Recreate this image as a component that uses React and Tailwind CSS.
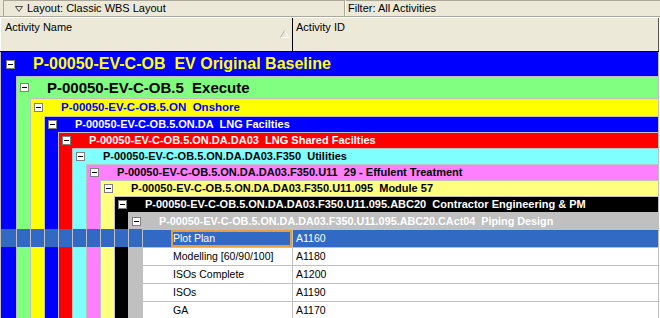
import React from "react";

// WBS levels, outermost first
const wbs = [
  { bg: "bg-[#0000ff]", fg: "text-[#ffff00]", size: "text-[16px]", h: "h-[24px]", code: "P-00050-EV-C-OB", name: "EV Original Baseline" },
  { bg: "bg-[#80ff80]", fg: "text-black", size: "text-[15px]", h: "h-[22px]", code: "P-00050-EV-C-OB.5", name: "Execute" },
  { bg: "bg-[#ffff00]", fg: "text-[#0000ff]", size: "text-[11.5px]", h: "h-[18px]", code: "P-00050-EV-C-OB.5.ON", name: "Onshore" },
  { bg: "bg-[#0000ff]", fg: "text-white", size: "text-[11px]", h: "h-[16px]", code: "P-00050-EV-C-OB.5.ON.DA", name: "LNG Facilties" },
  { bg: "bg-[#ff0000]", fg: "text-white", size: "text-[11px]", h: "h-[16px]", code: "P-00050-EV-C-OB.5.ON.DA.DA03", name: "LNG Shared Facilties" },
  { bg: "bg-[#80ffff]", fg: "text-black", size: "text-[11px]", h: "h-[16px]", code: "P-00050-EV-C-OB.5.ON.DA.DA03.F350", name: "Utilities" },
  { bg: "bg-[#ff80ff]", fg: "text-black", size: "text-[11px]", h: "h-[16px]", code: "P-00050-EV-C-OB.5.ON.DA.DA03.F350.U11", name: "29 - Effulent Treatment" },
  { bg: "bg-[#ffff80]", fg: "text-black", size: "text-[11px]", h: "h-[16px]", code: "P-00050-EV-C-OB.5.ON.DA.DA03.F350.U11.095", name: "Module 57" },
  { bg: "bg-black", fg: "text-white", size: "text-[11px]", h: "h-[16px]", code: "P-00050-EV-C-OB.5.ON.DA.DA03.F350.U11.095.ABC20", name: "Contractor Engineering & PM" },
  { bg: "bg-[#c0c0c0]", fg: "text-white", size: "text-[10.8px]", h: "h-[17px]", code: "P-00050-EV-C-OB.5.ON.DA.DA03.F350.U11.095.ABC20.CAct04", name: "Piping Design" },
];

const acts = [
  { name: "Plot Plan", id: "A1160", sel: true },
  { name: "Modelling [60/90/100]", id: "A1180" },
  { name: "ISOs Complete", id: "A1200" },
  { name: "ISOs", id: "A1190" },
  { name: "GA", id: "A1170" },
];

function Band({ i, bg }) {
  return (
    <div className={`${i === 0 ? "w-[16px]" : "w-[14px]"} shrink-0 h-full border-l border-[#c0c0c0] ${bg}`} />
  );
}

function Minus() {
  return (
    <div className="w-[9px] h-[9px] shrink-0 border border-[#808080] bg-white flex items-center justify-center">
      <div className="w-[5px] h-px bg-black" />
    </div>
  );
}

function WbsRow({ lvl }) {
  const row = wbs[lvl];
  return (
    <div className={`flex ${row.h}`}>
      {wbs.slice(0, lvl).map((b, i) => (
        <Band key={i} i={i} bg={b.bg} />
      ))}
      <div
        className={`flex-1 flex items-center border-l border-[#c0c0c0] ${lvl > 0 ? "border-t" : ""} ${row.bg} ${
          lvl === 0 ? "pl-[5px]" : "pl-[3px]"
        }`}
      >
        <Minus />
        <span className={`ml-[18px] font-bold whitespace-pre leading-none ${row.size} ${row.fg}`}>
          {row.code}  {row.name}
        </span>
      </div>
    </div>
  );
}

function ActRow({ a }) {
  return (
    <div className="flex h-[18px]">
      {wbs.map((b, i) => (
        <Band key={i} i={i} bg={a.sel ? "bg-[#316ac5]" : b.bg} />
      ))}
      <div
        className={`flex-1 flex border-l border-t border-[#c0c0c0] text-[10.5px] ${
          a.sel ? "bg-[#316ac5] text-white" : "bg-white text-black"
        }`}
      >
        <div className="w-[28px] shrink-0" />
        <div
          className={`w-[121px] shrink-0 flex items-center ${
            a.sel ? "border-2 border-[#e0a040] pl-0" : "pl-[2px]"
          }`}
        >
          {a.name}
        </div>
        <div className="flex-1 flex items-center pl-[3px] border-l border-[#c0c0c0]">{a.id}</div>
      </div>
    </div>
  );
}

export default function App() {
  return (
    <div className="w-[660px] h-[318px] overflow-hidden bg-white font-['Liberation_Sans',Arial,sans-serif] text-[11px] text-black">
      {/* toolbar */}
      <div className="flex h-[17px] bg-[#ece9d8] border-b border-[#aca899]">
        <div className="w-[342px] ml-[3px] flex items-center border-l border-t border-r border-[#aca899]">
          <svg width="8" height="6" viewBox="0 0 8 6" className="ml-[11px]">
            <path d="M0.5 0.5 L7.5 0.5 L4 5.5 Z" fill="none" stroke="#4d4d4d" strokeWidth="1" />
          </svg>
          <span className="ml-[4px]">Layout: Classic WBS Layout</span>
        </div>
        <div className="flex-1 flex items-center border-l border-t border-white border-t-[#aca899] pl-[2px]">
          Filter: All Activities
        </div>
      </div>

      <div className="w-[659px]">
        {/* column header */}
        <div className="flex h-[35px] bg-[#ece9d8] border-t border-white border-b border-b-black">
          <div className="w-[293px] shrink-0 relative border-l border-white border-r border-r-black pl-[4px] pt-[3px] leading-[13px]">
            Activity Name
            <svg width="9" height="8" viewBox="0 0 9 8" className="absolute right-[3px] top-[12px]">
              <path d="M0.5 7.5 L4.5 0.5 L8.5 7.5 Z" fill="none" stroke="#ffffff" strokeWidth="1" />
              <path d="M0.5 7.5 L4.5 0.5" fill="none" stroke="#aca899" strokeWidth="1" />
            </svg>
          </div>
          <div className="flex-1 border-r border-[#555] pl-[3px] pt-[3px] leading-[13px]">Activity ID</div>
        </div>

        {/* rows */}
        <div className="border-r border-[#c0c0c0]">
          {wbs.map((_, i) => (
            <WbsRow key={i} lvl={i} />
          ))}
          {acts.map((a) => (
            <ActRow key={a.id} a={a} />
          ))}
        </div>
      </div>
    </div>
  );
}
